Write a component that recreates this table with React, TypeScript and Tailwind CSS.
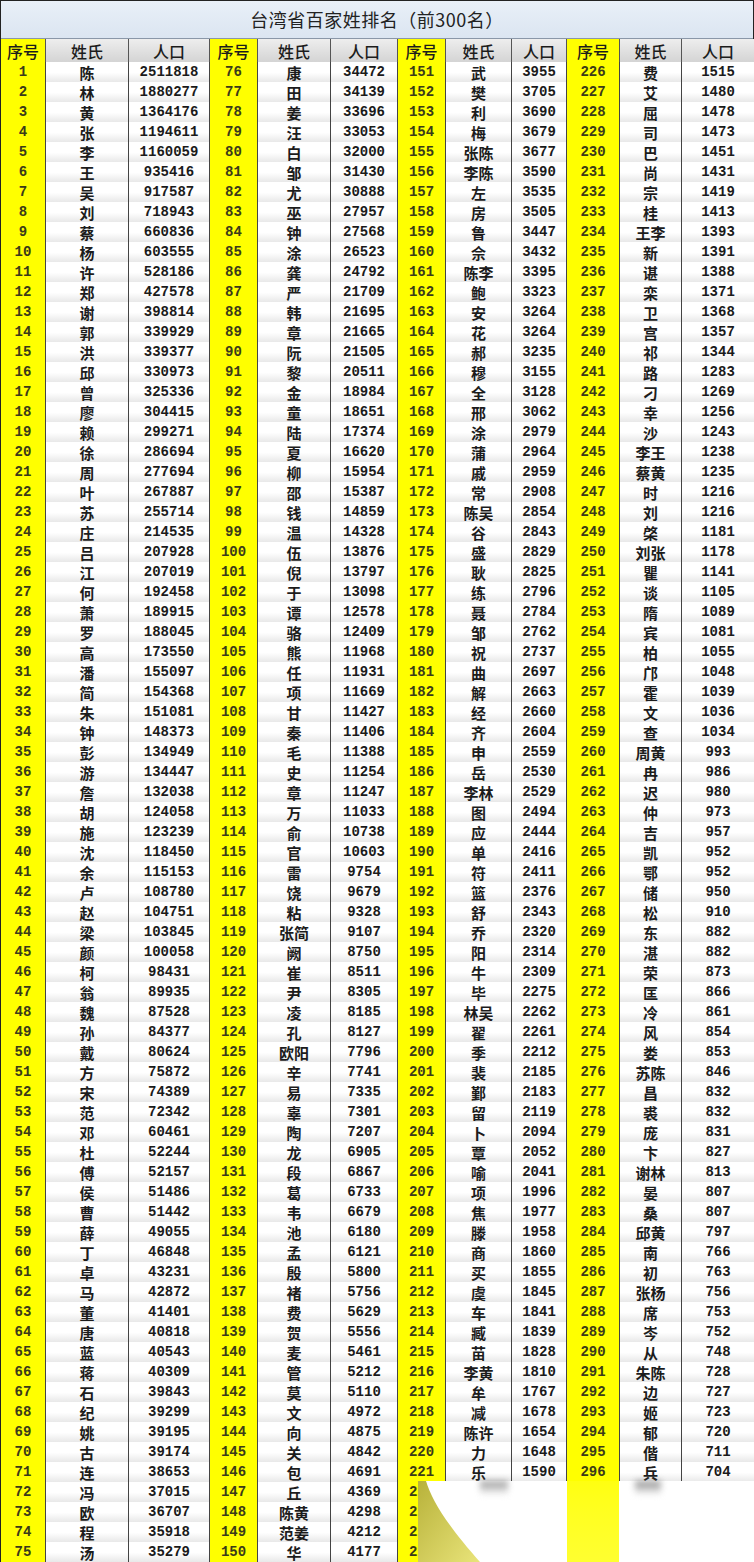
const C1 =
  "陈 2511818|林 1880277|黄 1364176|张 1194611|李 1160059|王 935416|吴 917587|刘 718943|蔡 660836|杨 603555|许 528186|郑 427578|谢 398814|郭 339929|洪 339377|邱 330973|曾 325336|廖 304415|赖 299271|徐 286694|周 277694|叶 267887|苏 255714|庄 214535|吕 207928|江 207019|何 192458|萧 189915|罗 188045|高 173550|潘 155097|简 154368|朱 151081|钟 148373|彭 134949|游 134447|詹 132038|胡 124058|施 123239|沈 118450|余 115153|卢 108780|赵 104751|梁 103845|颜 100058|柯 98431|翁 89935|魏 87528|孙 84377|戴 80624|方 75872|宋 74389|范 72342|邓 60461|杜 52244|傅 52157|侯 51486|曹 51442|薛 49055|丁 46848|卓 43231|马 42872|董 41401|唐 40818|蓝 40543|蒋 40309|石 39843|纪 39299|姚 39195|古 39174|连 38653|冯 37015|欧 36707|程 35918|汤 35279"
const C2 =
  "康 34472|田 34139|姜 33696|汪 33053|白 32000|邹 31430|尤 30888|巫 27957|钟 27568|涂 26523|龚 24792|严 21709|韩 21695|章 21665|阮 21505|黎 20511|金 18984|童 18651|陆 17374|夏 16620|柳 15954|邵 15387|钱 14859|温 14328|伍 13876|倪 13797|于 13098|谭 12578|骆 12409|熊 11968|任 11931|项 11669|甘 11427|秦 11406|毛 11388|史 11254|章 11247|万 11033|俞 10738|官 10603|雷 9754|饶 9679|粘 9328|张简 9107|阙 8750|崔 8511|尹 8305|凌 8185|孔 8127|欧阳 7796|辛 7741|易 7335|辜 7301|陶 7207|龙 6905|段 6867|葛 6733|韦 6679|池 6180|孟 6121|殷 5800|褚 5756|费 5629|贺 5556|麦 5461|管 5212|莫 5110|文 4972|向 4875|关 4842|包 4691|丘 4369|陈黄 4298|范姜 4212|华 4177"
const C3 =
  "武 3955|樊 3705|利 3690|梅 3679|张陈 3677|李陈 3590|左 3535|房 3505|鲁 3447|佘 3432|陈李 3395|鲍 3323|安 3264|花 3264|郝 3235|穆 3155|全 3128|邢 3062|涂 2979|蒲 2964|戚 2959|常 2908|陈吴 2854|谷 2843|盛 2829|耿 2825|练 2796|聂 2784|邹 2762|祝 2737|曲 2697|解 2663|经 2660|齐 2604|申 2559|岳 2530|李林 2529|图 2494|应 2444|单 2416|符 2411|篮 2376|舒 2343|乔 2320|阳 2314|牛 2309|毕 2275|林吴 2262|翟 2261|季 2212|裴 2185|鄞 2183|留 2119|卜 2094|覃 2052|喻 2041|项 1996|焦 1977|滕 1958|商 1860|买 1855|虞 1845|车 1841|臧 1839|苗 1828|李黄 1810|牟 1767|减 1678|陈许 1654|力 1648|乐 1590"
const C4 =
  "费 1515|艾 1480|屈 1478|司 1473|巴 1451|尚 1431|宗 1419|桂 1413|王李 1393|新 1391|谌 1388|栾 1371|卫 1368|宫 1357|祁 1344|路 1283|刁 1269|幸 1256|沙 1243|李王 1238|蔡黄 1235|时 1216|刘 1216|棨 1181|刘张 1178|瞿 1141|谈 1105|隋 1089|宾 1081|柏 1055|邝 1048|霍 1039|文 1036|查 1034|周黄 993|冉 986|迟 980|仲 973|吉 957|凯 952|鄂 952|储 950|松 910|东 882|湛 882|荣 873|匡 866|冷 861|风 854|娄 853|苏陈 846|昌 832|裘 832|庞 831|卞 827|谢林 813|晏 807|桑 807|邱黄 797|南 766|初 763|张杨 756|席 753|岑 752|从 748|朱陈 728|边 727|姬 723|郁 720|偕 711|兵 704"

const parse = (s: string) => s.split("|").map((x) => x.split(" "))
const cols = [parse(C1), parse(C2), parse(C3), parse(C4)]

const grid =
  "grid grid-cols-[45px_83px_81px_48px_73px_67px_48px_66px_55px_53px_62px_73px]"
const mono = "font-['Liberation_Mono','DejaVu_Sans_Mono',monospace] font-bold"

export default function App() {
  const rows = Array.from({ length: 75 }, (_, i) => i)

  return (
    <div className="relative w-[754px] h-[1562px] bg-white overflow-hidden font-['Noto_Sans_CJK_SC',sans-serif] text-[#1c1c1c]">
      <div className="border-l border-r border-t border-[#222]">
        <div className="h-[38px] flex items-center justify-center bg-gradient-to-b from-[#e9f0f8] to-[#dbe5f1] border-b border-[#8a97a8] text-[18px] tracking-[0.5px] text-[#222]">
          台湾省百家姓排名（前300名）
        </div>

        <div className={`${grid} h-[23px]`}>
          {cols.map((_, c) => (
            <div key={c} className="contents">
              <div className="flex items-center justify-center bg-[#ffff00] border-r border-b border-[#555] text-[16px] font-medium">
                序号
              </div>
              <div className="flex items-center justify-center bg-gradient-to-b from-[#eeeeee] to-[#d3d3d3] border-r border-b border-[#555] text-[16px] font-medium">
                姓氏
              </div>
              <div className="flex items-center justify-center bg-gradient-to-b from-[#eeeeee] to-[#d3d3d3] border-r border-b border-[#555] text-[16px] font-medium">
                人口
              </div>
            </div>
          ))}
        </div>

        {rows.map((i) => (
          <div key={i} className={`${grid} h-[20px]`}>
            {cols.map((col, c) => {
              const item = col[i] || ["", ""]
              return (
                <div key={c} className="contents">
                  <div
                    className={`flex items-center justify-center bg-[#ffff00] border-r border-r-[#444] border-b border-b-[#c9c94a] text-[14px] text-[#3a3a1a] ${mono}`}
                  >
                    {c * 75 + i + 1}
                  </div>
                  <div className="flex items-center justify-center bg-gradient-to-b from-white via-white to-[#e6e6e6] border-r border-r-[#444] border-b border-b-[#666] text-[15px] font-bold leading-none">
                    {item[0]}
                  </div>
                  <div
                    className={`flex items-center justify-center bg-gradient-to-b from-white via-white to-[#e6e6e6] border-r border-r-[#444] border-b border-b-[#666] text-[14px] text-[#1a1a1a] ${mono}`}
                  >
                    {item[1]}
                  </div>
                </div>
              )
            })}
          </div>
        ))}
      </div>

      {/* smeared corner lying over the last rows */}
      <div className="absolute left-[418px] top-[1481px] w-[336px] h-[81px] flex bg-white">
        <div className="w-[149px] h-full flex items-start">
          <svg width="62" height="81" viewBox="0 0 62 81">
            <defs>
              <linearGradient id="sm" x1="0" y1="0" x2="1" y2="1">
                <stop offset="0" stopColor="#b8b23a" />
                <stop offset="1" stopColor="#e9e47a" />
              </linearGradient>
            </defs>
            <path d="M0 0 L8 0 C14 20 30 45 62 81 L0 81 Z" fill="url(#sm)" />
          </svg>
          <div className="w-[28px] h-[14px] bg-gradient-to-b from-[#555] to-white opacity-60 blur-[3px]" />
        </div>
        <div className="w-[52px] h-full bg-gradient-to-b from-[#ffff10] to-[#ffff30]" />
        <div className="flex-1 h-full flex items-start pl-[16px]">
          <div className="w-[26px] h-[14px] bg-gradient-to-b from-[#444] to-white opacity-60 blur-[3px]" />
        </div>
      </div>
    </div>
  )
}
